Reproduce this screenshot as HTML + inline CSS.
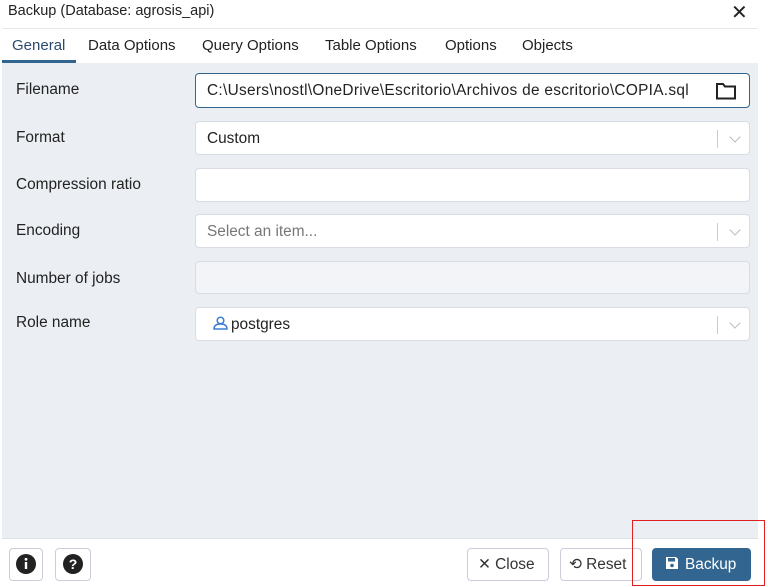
<!DOCTYPE html>
<html><head><style>
body{margin:0;width:768px;height:587px;background:#fff;font-family:"Liberation Sans",Arial,sans-serif;position:relative;overflow:hidden;color:#222}
.a{position:absolute}
.title{left:8px;top:3px;font-size:14.5px;color:#222}
.x{left:731px;top:0px;font-size:20px}
.tabs{top:28px;left:2px;width:756px;height:34px;border-top:1px solid #e6e8ec;border-bottom:1px solid #dde1e8}
.tab{position:absolute;top:8px;font-size:15px;color:#222}
.panel{left:2px;top:63px;width:756px;height:475px;background:#ebeef3;border-bottom:1px solid #dde1e8}
.lbl{left:16px;font-size:15.4px;color:#222}
.in{left:195px;width:555px;background:#fff;border:1px solid #d8dce3;border-radius:4px;font-size:15.4px;color:#222;box-sizing:border-box;padding-left:11px;line-height:33px}
.sep{position:absolute;right:31px;top:8px;width:1px;height:18px;background:#ccc}
.chev{position:absolute;right:10px;top:11px;width:7px;height:7px;border-right:1.5px solid #bbb;border-bottom:1.5px solid #bbb;transform:rotate(45deg)}
.btn{top:548px;height:33px;border:1px solid #ccd;border-radius:4px;box-sizing:border-box;font-size:15.4px;color:#333;line-height:31px}
</style></head><body>
<div class="a title">Backup (Database: agrosis_api)</div>
<div class="a x">✕</div>
<div class="a tabs">
<div class="tab" style="left:10px;color:#2c4a6e">General</div>
<div class="a" style="left:0;top:31px;width:74px;height:3px;background:#326690"></div>
<div class="tab" style="left:86px">Data Options</div>
<div class="tab" style="left:200px">Query Options</div>
<div class="tab" style="left:323px">Table Options</div>
<div class="tab" style="left:443px">Options</div>
<div class="tab" style="left:520px">Objects</div>
</div>
<div class="a panel"></div>
<div class="a lbl" style="top:81px">Filename</div>
<div class="a in" style="top:73px;height:35px;border-color:#326690;border-width:1.5px;letter-spacing:0.3px">C:\Users\nostl\OneDrive\Escritorio\Archivos de escritorio\COPIA.sql
<svg class="a" style="right:12px;top:8px" width="22" height="18" viewBox="0 0 22 18"><path d="M2 2h6l2 2.5h10v12H2z" fill="none" stroke="#222" stroke-width="2"/></svg></div>
<div class="a lbl" style="top:129px">Format</div>
<div class="a in" style="top:121px;height:34px">Custom<div class="sep"></div><div class="chev"></div></div>
<div class="a lbl" style="top:176px">Compression ratio</div>
<div class="a in" style="top:168px;height:34px"></div>
<div class="a lbl" style="top:222px">Encoding</div>
<div class="a in" style="top:214px;height:34px;color:#777">Select an item...<div class="sep"></div><div class="chev"></div></div>
<div class="a lbl" style="top:270px">Number of jobs</div>
<div class="a in" style="top:261px;height:33px;background:#f3f4f8"></div>
<div class="a lbl" style="top:314px">Role name</div>
<div class="a in" style="top:307px;height:34px;padding-left:16px"><svg width="17" height="14" viewBox="0 0 17 14" style="vertical-align:-1px;margin-right:2px"><circle cx="8.5" cy="4.5" r="3.3" fill="none" stroke="#3b7ed6" stroke-width="1.5"/><path d="M2 13c0-4 3-5 6.5-5s6.5 1 6.5 5z" fill="none" stroke="#3b7ed6" stroke-width="1.5"/></svg>postgres<div class="sep"></div><div class="chev"></div></div>
<div class="a btn" style="left:9px;width:34px;text-align:center"><svg width="22" height="22" viewBox="0 0 22 22" style="margin-top:4px"><circle cx="11" cy="11" r="10" fill="#222"/><rect x="9.8" y="9" width="2.4" height="7" fill="#fff"/><circle cx="11" cy="6.3" r="1.4" fill="#fff"/></svg></div>
<div class="a btn" style="left:55px;width:36px;text-align:center"><svg width="22" height="22" viewBox="0 0 22 22" style="margin-top:4px"><circle cx="11" cy="11" r="10" fill="#222"/><text x="11" y="16" font-size="14" font-weight="bold" text-anchor="middle" fill="#fff" font-family="Liberation Sans">?</text></svg></div>
<div class="a btn" style="left:467px;width:82px;padding-left:10px">✕ Close</div>
<div class="a btn" style="left:560px;width:82px;padding-left:8px">⟲ Reset</div>
<div class="a btn" style="left:652px;width:99px;background:#326690;border-color:#326690;color:#fff;padding-left:12px"><svg width="14" height="14" viewBox="0 0 14 14" style="vertical-align:-1px;margin-right:6px"><path d="M1 1h10l2 2v10H1z" fill="#fff"/><rect x="3" y="2" width="7" height="3.5" fill="#326690"/><circle cx="7" cy="9.5" r="1.8" fill="#326690"/></svg>Backup</div>
<div class="a" style="left:632px;top:520px;width:131px;height:64px;border:1px solid #e02020"></div>
</body></html>
